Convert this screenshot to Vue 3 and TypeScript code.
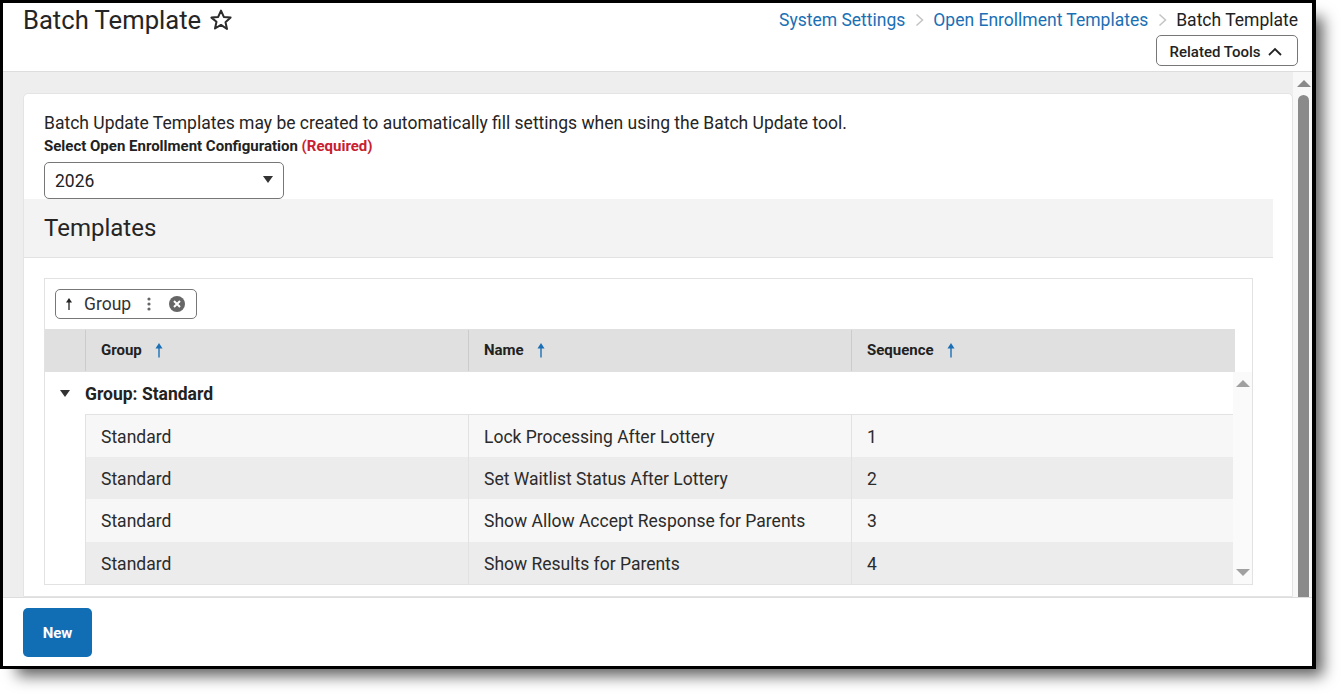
<script setup lang="ts">
interface Row { group: string; name: string; seq: number }
const rows: Row[] = [
  { group: 'Standard', name: 'Lock Processing After Lottery', seq: 1 },
  { group: 'Standard', name: 'Set Waitlist Status After Lottery', seq: 2 },
  { group: 'Standard', name: 'Show Allow Accept Response for Parents', seq: 3 },
  { group: 'Standard', name: 'Show Results for Parents', seq: 4 },
]
const cols = ['Group', 'Name', 'Sequence']
</script>

<template>
  <div class="page">
    <div class="frame">
      <header class="top">
        <div class="title">
          <h1>Batch Template</h1>
          <svg class="star" width="24" height="24" viewBox="0 0 24 24" fill="none" stroke="#2b2b2b" stroke-width="2" stroke-linejoin="round"><path d="M12 2.600l2.800 6.300 6.800.7-5.100 4.600 1.500 6.800L12 16.900l-6 3.600 1.500-6.800L2.400 9.600l6.800-.7z" /></svg>
        </div>
        <div class="crumbs-col">
          <nav class="crumbs">
            <a>System Settings</a>
            <svg class="sep" width="9" height="14" viewBox="0 0 9 14" fill="none" stroke="#c4c4c4" stroke-width="1.500"><path d="M1.500 1.500L7.500 7l-6 5.500" /></svg>
            <a>Open Enrollment Templates</a>
            <svg class="sep" width="9" height="14" viewBox="0 0 9 14" fill="none" stroke="#c4c4c4" stroke-width="1.500"><path d="M1.500 1.500L7.500 7l-6 5.500" /></svg>
            <span>Batch Template</span>
          </nav>
          <button class="tools">
            Related Tools
            <svg width="14" height="9" viewBox="0 0 14 9" fill="none" stroke="#222" stroke-width="1.800"><path d="M1 8L7 2l6 6" /></svg>
          </button>
        </div>
      </header>

      <div class="middle">
        <main class="scroller">
          <section class="card">
            <div class="intro">
              <p>Batch Update Templates may be created to automatically fill settings when using the Batch Update tool.</p>
              <label>Select Open Enrollment Configuration <em>(Required)</em></label>
              <div class="select">
                <span>2026</span>
                <i class="tri"></i>
              </div>
            </div>
            <h2>Templates</h2>
            <div class="grid-wrap">
              <div class="grid">
                <div class="chips">
                  <div class="chip">
                    <svg width="10" height="14" viewBox="0 0 10 14"><path d="M5 13V4" fill="none" stroke="#222" stroke-width="1.300" /><path d="M5 1L8 5.500H2z" fill="#222" /></svg>
                    <span>Group</span>
                    <svg class="dots" width="4" height="14" viewBox="0 0 4 14" fill="#666"><circle cx="2" cy="2" r="1.600" /><circle cx="2" cy="7" r="1.600" /><circle cx="2" cy="12" r="1.600" /></svg>
                    <svg class="x" width="16" height="16" viewBox="0 0 16 16"><circle cx="8" cy="8" r="8" fill="#666" /><path d="M5 5l6 6M11 5l-6 6" stroke="#fff" stroke-width="2" /></svg>
                  </div>
                </div>
                <div class="head-row">
                  <div class="head">
                    <div class="spacer"></div>
                    <div v-for="c in cols" :key="c" class="hcell">
                      <b>{{ c }}</b>
                      <svg width="10" height="16" viewBox="0 0 10 16"><path d="M5 15.500V4" fill="none" stroke="#1a6fb5" stroke-width="1.400" /><path d="M5 1L8.500 6.500H1.500z" fill="#1a6fb5" /></svg>
                    </div>
                  </div>
                </div>
                <div class="body">
                  <div class="rows">
                    <div class="group-row">
                      <i class="tri small"></i>
                      <b>Group: Standard</b>
                    </div>
                    <div class="data">
                      <div v-for="r in rows" :key="r.seq" class="row">
                        <div class="cell">{{ r.group }}</div>
                        <div class="cell">{{ r.name }}</div>
                        <div class="cell last">{{ r.seq }}</div>
                      </div>
                    </div>
                  </div>
                  <div class="inner-bar">
                    <i class="up"></i>
                    <i class="down"></i>
                  </div>
                </div>
              </div>
            </div>
          </section>
          <div class="outer-bar">
            <i class="up"></i>
            <div class="thumb"></div>
          </div>
        </main>
      </div>

      <footer class="foot">
        <button class="new">New</button>
      </footer>
    </div>
  </div>
</template>

<style>
html, body { margin: 0; padding: 0; background: #fff; }
</style>

<style scoped>
.page { width: 1341px; height: 694px; overflow: hidden; }
.frame {
  width: 1316px;
  height: 669px;
  box-sizing: border-box;
  border: 3px solid #000;
  border-right-width: 4px;
  background: #fff;
  box-shadow: 12px 12px 14px -5px rgba(0, 0, 0, 0.62);
  display: flex;
  flex-direction: column;
  font-family: Roboto, "Liberation Sans", sans-serif;
  color: #222;
  overflow: hidden;
}
.top {
  height: 69px;
  flex: none;
  box-sizing: border-box;
  border-bottom: 1px solid #ddd;
  display: flex;
  justify-content: space-between;
  padding: 0 14px 0 20px;
}
.title { display: flex; align-items: flex-start; gap: 8px; }
h1 { margin: 0; font-size: 25.600px; font-weight: 400; line-height: 34px; color: #252525; }
.star { margin-top: 5px; }
.crumbs-col { display: flex; flex-direction: column; align-items: flex-end; }
.crumbs { display: flex; align-items: center; font-size: 17.500px; line-height: 30px; height: 32px; box-sizing: border-box; padding-top: 2px; }
.crumbs a { color: #1a6fb5; }
.sep { margin: 0 9px 0 10px; }
.tools {
  width: 142px;
  height: 31px;
  box-sizing: border-box;
  border: 1px solid #777;
  border-radius: 5px;
  background: #fff;
  font: 500 15px Roboto, sans-serif;
  color: #222;
  display: flex;
  align-items: center;
  justify-content: center;
  gap: 8px;
  padding: 2px 2px 0 0;
}
.middle { flex: 1; min-height: 0; background: #eee; }
.scroller { height: 100%; display: flex; padding-left: 20px; overflow: hidden; }
.card {
  width: 1270px;
  margin-top: 21px;
  flex: none;
  box-sizing: border-box;
  background: #fff;
  border: 1px solid #e4e4e4;
  border-radius: 5px 5px 0 0;
  padding-right: 19px;
}
.intro { padding: 19px 0 0 20px; }
.intro p { margin: 0; font-size: 17.500px; line-height: 21px; color: #252525; }
label { display: block; font-size: 15px; font-weight: 700; line-height: 20px; margin-top: 2px; }
label em { font-style: normal; color: #c8202f; }
.select {
  margin-top: 6px;
  width: 240px;
  height: 37px;
  box-sizing: border-box;
  border: 1px solid #777;
  border-radius: 5px;
  display: flex;
  align-items: center;
  justify-content: space-between;
  padding: 0 10px;
  font-size: 17.500px;
}
.tri { width: 0; height: 0; border-left: 5.500px solid transparent; border-right: 5.500px solid transparent; border-top: 7px solid #333; margin-top: -2px; }
h2 {
  margin: 0;
  height: 59px;
  box-sizing: border-box;
  background: #f3f3f3;
  border-bottom: 1px solid #e2e2e2;
  padding-left: 20px;
  font-size: 24px;
  font-weight: 400;
  line-height: 59px;
  color: #252525;
}
.grid-wrap { padding: 20px 20px 0; }
.grid { border: 1px solid #e2e2e2; height: 307px; box-sizing: border-box; }
.chips { height: 50px; padding: 10px 0 0 10px; box-sizing: border-box; }
.chip {
  width: 142px;
  height: 30px;
  box-sizing: border-box;
  border: 1px solid #777;
  border-radius: 5px;
  display: flex;
  align-items: center;
  padding-left: 8px;
  font-size: 17.500px;
  color: #333;
}
.chip span { margin-left: 10px; }
.dots { margin-left: 16px; }
.x { margin-left: 18px; }
.head-row { height: 43px; }
.head { width: 1190px; height: 43px; background: #e0e0e0; display: grid; grid-template-columns: 41px 383px 383px 383px; }
.spacer { border-right: 1px solid #ccc; margin: 1px 0; }
.hcell { display: flex; align-items: center; gap: 12.500px; padding: 0 0 2px 15px; border-right: 1px solid #ccc; font-size: 15px; margin: 1px 0; }
.hcell:last-child { border-right: 0; }
.body { display: flex; height: 212px; }
.rows { width: 1188px; flex: none; }
.group-row { height: 42px; display: flex; align-items: center; font-size: 17.500px; padding: 2px 0 0 15px; box-sizing: border-box; }
.group-row b { margin-left: 15px; }
.data { margin-left: 40px; border-top: 1px solid #e2e2e2; border-left: 1px solid #e2e2e2; }
.row { display: grid; grid-template-columns: 383px 383px 1fr; height: 42.200px; background: #f7f7f7; }
.row:nth-child(even) { background: #ececec; }
.cell { display: flex; align-items: center; padding: 2px 0 0 15px; border-right: 1px solid #e2e2e2; font-size: 17.500px; color: #2b2b2b; }
.cell.last { border-right: 0; }
.inner-bar { flex: 1; background: #fafafa; display: flex; flex-direction: column; align-items: center; justify-content: space-between; padding: 8px 0; box-sizing: border-box; }
.up { width: 0; height: 0; border-left: 7px solid transparent; border-right: 7px solid transparent; border-bottom: 7px solid #a0a0a0; }
.down { width: 0; height: 0; border-left: 7px solid transparent; border-right: 7px solid transparent; border-top: 7px solid #a0a0a0; }
.outer-bar { width: 19px; flex: none; box-sizing: border-box; padding-left: 5px; display: flex; flex-direction: column; align-items: flex-start; background: #f8f8f8; }
.outer-bar .up { margin: 8px 0 0 -1px; border-bottom-color: #8a8a8a; }
.thumb { width: 11px; flex: 1; margin-top: 8px; background: #8a8a8a; border-radius: 6px 6px 0 0; }
.foot { height: 69px; flex: none; box-sizing: border-box; border-top: 1px solid #ddd; padding: 10px 20px; }
.new {
  width: 69px;
  height: 49px;
  border: 0;
  border-radius: 5px;
  background: #126eb4;
  color: #fff;
  font: 700 15px Roboto, sans-serif;
  padding: 0;
}
</style>
